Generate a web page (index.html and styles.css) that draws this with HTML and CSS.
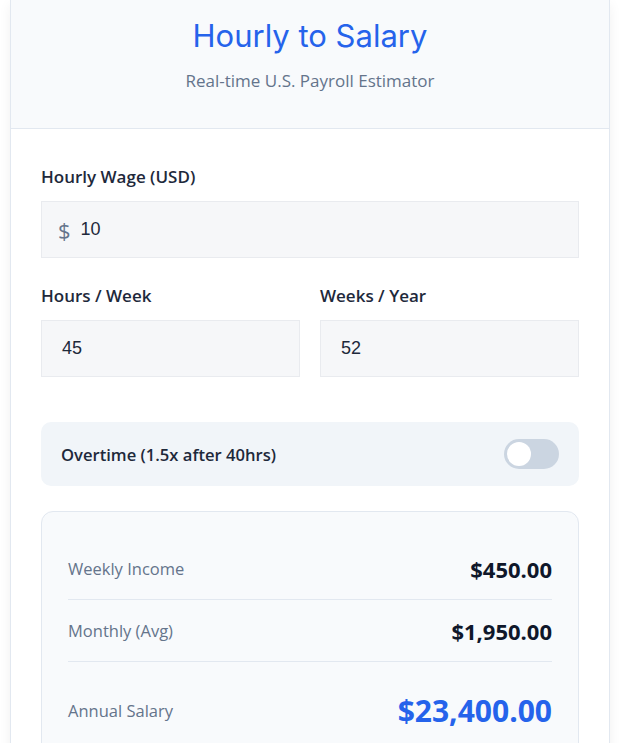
FILE: index.html
```html
<!DOCTYPE html>
<html lang="en">
<head>
    <meta charset="UTF-8">
    <meta name="viewport" content="width=device-width, initial-scale=1.0">
    <title>Hourly to Salary</title>
    <link rel="stylesheet" href="styles.css">
</head>
<body>
    <div class="card">
        <div class="header">
            <h1 class="title">Hourly to Salary</h1>
            <div class="subtitle">Real-time U.S. Payroll Estimator</div>
        </div>

        <div class="body">
            <!-- wage -->
            <div class="field">
                <label class="field-label">Hourly Wage (USD)</label>
                <div class="input-box">
                    <span class="currency">$</span>
                    <span class="input-value">10</span>
                </div>
            </div>

            <div class="field-row">
                <div class="field">
                    <label class="field-label">Hours / Week</label>
                    <div class="input-box">
                        <span class="input-value">45</span>
                    </div>
                </div>
                <div class="field">
                    <label class="field-label">Weeks / Year</label>
                    <div class="input-box">
                        <span class="input-value">52</span>
                    </div>
                </div>
            </div>

            <!-- overtime -->
            <div class="overtime">
                <span class="overtime-label">Overtime (1.5x after 40hrs)</span>
                <div class="toggle"><div class="toggle-knob"></div></div>
            </div>

            <!-- results -->
            <div class="results">
                <div class="result-row">
                    <span class="result-label">Weekly Income</span>
                    <span class="result-value">$450.00</span>
                </div>
                <div class="result-row">
                    <span class="result-label">Monthly (Avg)</span>
                    <span class="result-value">$1,950.00</span>
                </div>
                <div class="result-row total">
                    <span class="result-label">Annual Salary</span>
                    <span class="result-value">$23,400.00</span>
                </div>
            </div>
        </div>
    </div>
</body>
</html>
```

FILE: styles.css
```css
* {
    margin: 0;
    padding: 0;
    box-sizing: border-box;
}

body {
    background-color: #fff;
    color: #1e293b;
    font-family: 'Open Sans', 'Noto Sans', Arial, sans-serif;
}

.card {
    width: 600px;
    margin: 0 10px;
    background-color: #fff;
    border: 1px solid #e2e8f0;
    border-top: none;
    box-shadow: 0 4px 12px rgba(0,0,0,0.06);
    min-height: 760px;
}

.header {
    height: 129px;
    background-color: #f8fafc;
    border-bottom: 1px solid #e2e8f0;
    text-align: center;
    padding-top: 16px;
}

.title {
    font-family: Inter, 'Open Sans', sans-serif;
    font-size: 31px;
    font-weight: 400;
    color: #2563eb;
    line-height: 40px;
}

.subtitle {
    margin-top: 14px;
    font-size: 17px;
    color: #64748b;
    line-height: 22px;
}

.body {
    padding: 36px 30px 0 30px;
}

.field {
    flex: 1;
}

.field-label {
    display: block;
    font-size: 17px;
    font-weight: 600;
    color: #1e293b;
    line-height: 24px;
    margin-bottom: 12px;
}

.input-box {
    height: 57px;
    background-color: #f6f7f9;
    border: 1px solid #e9ebef;
    display: flex;
    align-items: center;
    padding: 0 16px;
}

.currency {
    font-size: 22px;
    color: #64748b;
    margin-right: 10px;
}

.input-value {
    font-family: 'Liberation Sans', Arial, sans-serif;
    font-size: 18px;
    color: #1e293b;
}

.field-row {
    display: flex;
    gap: 20px;
    margin-top: 26px;
}

.field-row .input-box {
    padding-left: 20px;
}

.overtime {
    margin-top: 45px;
    height: 64px;
    background-color: #f1f5f9;
    border-radius: 10px;
    display: flex;
    align-items: center;
    justify-content: space-between;
    padding: 0 20px;
}

.overtime-label {
    font-size: 16.6px;
    font-weight: 600;
    color: #1e293b;
}

.toggle {
    width: 55px;
    height: 30px;
    background-color: #cbd5e1;
    border-radius: 15px;
    padding: 3px;
}

.toggle-knob {
    width: 24px;
    height: 24px;
    background-color: #fff;
    border-radius: 50%;
}

.results {
    margin-top: 25px;
    background-color: #f8fafc;
    border: 1px solid #e2e8f0;
    border-radius: 12px;
    padding: 26px 26px 20px 26px;
}

.result-row {
    display: flex;
    justify-content: space-between;
    align-items: center;
    height: 62px;
    border-bottom: 1px solid #e2e8f0;
}

.result-row.total {
    border-bottom: none;
    height: 96px;
}

.result-label {
    font-size: 16.5px;
    color: #64748b;
}

.result-value {
    font-size: 22px;
    font-weight: 700;
    color: #0f172a;
}

.total .result-value {
    font-size: 30px;
    color: #2563eb;
}
```
